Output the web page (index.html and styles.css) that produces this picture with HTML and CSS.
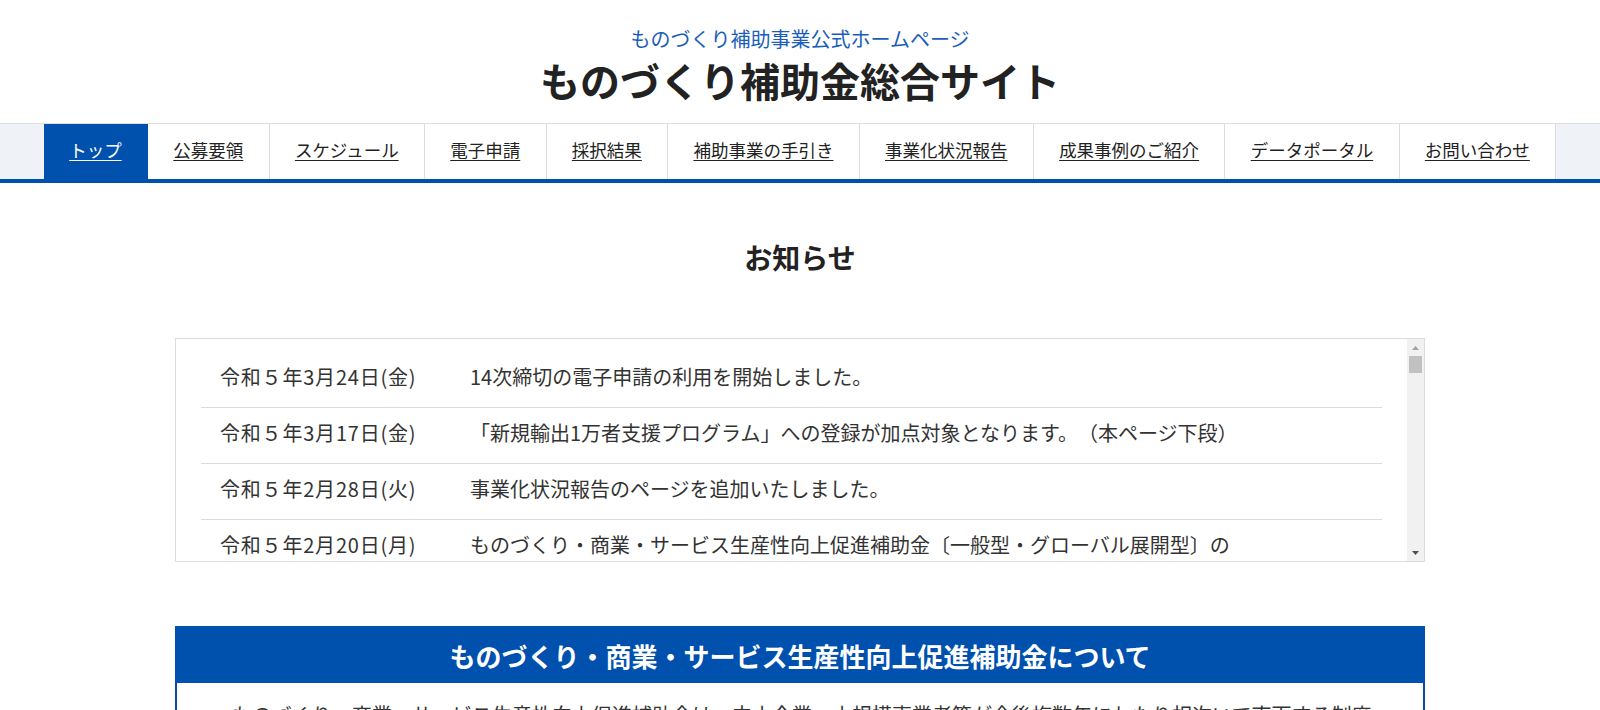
FILE: index.html
```html
<!DOCTYPE html>
<html lang="ja">
<head>
<meta charset="utf-8">
<title>ものづくり補助金総合サイト</title>
<link rel="stylesheet" href="styles.css">
</head>
<body>
<header class="site-header">
  <p class="site-sub">ものづくり補助事業公式ホームページ</p>
  <h1 class="site-title">ものづくり補助金総合サイト</h1>
</header>
<nav class="gnav">
  <ul class="gnav-list">
    <li class="gnav-item is-active"><a href="#">トップ</a></li>
    <li class="gnav-item"><a href="#">公募要領</a></li>
    <li class="gnav-item"><a href="#">スケジュール</a></li>
    <li class="gnav-item"><a href="#">電子申請</a></li>
    <li class="gnav-item"><a href="#">採択結果</a></li>
    <li class="gnav-item"><a href="#">補助事業の手引き</a></li>
    <li class="gnav-item"><a href="#">事業化状況報告</a></li>
    <li class="gnav-item"><a href="#">成果事例のご紹介</a></li>
    <li class="gnav-item"><a href="#">データポータル</a></li>
    <li class="gnav-item"><a href="#">お問い合わせ</a></li>
  </ul>
</nav>
<main class="main">
  <section class="news">
    <h2 class="news-title">お知らせ</h2>
    <div class="news-box">
      <div class="news-list">
        <dl class="news-row"><dt class="news-date">令和５年3月24日(金)</dt><dd class="news-text">14次締切の電子申請の利用を開始しました。</dd></dl>
        <dl class="news-row"><dt class="news-date">令和５年3月17日(金)</dt><dd class="news-text">「新規輸出1万者支援プログラム」への登録が加点対象となります。（本ページ下段）</dd></dl>
        <dl class="news-row"><dt class="news-date">令和５年2月28日(火)</dt><dd class="news-text">事業化状況報告のページを追加いたしました。</dd></dl>
        <dl class="news-row"><dt class="news-date">令和５年2月20日(月)</dt><dd class="news-text">ものづくり・商業・サービス生産性向上促進補助金〔一般型・グローバル展開型〕の公募要領を公開しました。</dd></dl>
        <dl class="news-row"><dt class="news-date">令和５年1月31日(火)</dt><dd class="news-text">13次締切の採択結果を公表しました。</dd></dl>
      </div>
      <div class="scrollbar" aria-hidden="true">
        <span class="sb-btn"><svg width="7" height="4" viewBox="0 0 7 4"><path d="M3.5 0L7 4H0z" fill="#a3a3a3"/></svg></span>
        <span class="sb-thumb"></span>
        <span class="sb-track"></span>
        <span class="sb-btn"><svg width="7" height="4" viewBox="0 0 7 4"><path d="M0 0H7L3.5 4z" fill="#505050"/></svg></span>
      </div>
    </div>
  </section>
  <section class="about">
    <h2 class="about-title">ものづくり・商業・サービス生産性向上促進補助金について</h2>
    <div class="about-body">
      <p>ものづくり・商業・サービス生産性向上促進補助金は、中小企業・小規模事業者等が今後複数年にわたり相次いで直面する制度変更（働き方改革や被用者保険の適用拡大、賃上げ、インボイス導入等）等に対応するため、中小企業・小規模事業者等が取り組む革新的サービス開発・試作品開発・生産プロセスの改善を行うための設備投資等を支援するものです。</p>
    </div>
  </section>
</main>
</body>
</html>
```
FILE: styles.css
```css
body {
  margin: 0;
  font-family: "Noto Sans CJK JP", "Noto Sans", sans-serif;
  color: #222;
  background: #fff;
  text-spacing-trim: space-all;
}
a {
  color: inherit;
}
.site-header {
  text-align: center;
  padding: 27px 0 19px;
}
.site-sub {
  margin: 0;
  font-size: 20px;
  line-height: 24px;
  color: #1b5eb9;
}
.site-title {
  margin: 5px 0 0;
  font-size: 40px;
  line-height: 48px;
  font-weight: 700;
  color: #222;
}
.gnav {
  background: #eff3f8;
  border-top: 1px solid #dedede;
  border-bottom: 4px solid #0050ae;
}
.gnav-list {
  list-style: none;
  margin: 0;
  padding: 0;
  display: flex;
  justify-content: center;
}
.gnav-item {
  background: #fff;
  border-right: 1px solid #dcdcdc;
}
.gnav-item a {
  display: block;
  padding: 0 25.3px;
  height: 55px;
  line-height: 52px;
  font-size: 17.5px;
  color: #222;
  text-decoration: underline;
  text-underline-offset: 3px;
}
.gnav-item.is-active {
  background: #0050ae;
  border-right-color: #0050ae;
}
.gnav-item.is-active a {
  color: #fff;
}
.main {
  width: 1250px;
  margin: 0 auto;
}
.news-title {
  margin: 54px 0 0;
  text-align: center;
  font-size: 28px;
  line-height: 40px;
  font-weight: 700;
  color: #222;
}
.news-box {
  margin-top: 61px;
  box-sizing: border-box;
  height: 224px;
  border: 1px solid #dcdcdc;
  display: flex;
}
.news-list {
  flex: 1;
  min-width: 0;
  overflow: hidden;
  padding: 13px 25px 0;
}
.scrollbar {
  flex: 0 0 17px;
  display: flex;
  flex-direction: column;
  background: #f1f1f1;
}
.sb-btn {
  height: 17px;
  display: flex;
  align-items: center;
  justify-content: center;
}
.sb-btn svg {
  display: block;
}
.sb-thumb {
  height: 17px;
  margin: 0 2px;
  background: #c1c1c1;
}
.sb-track {
  flex: 1;
}
.news-row {
  margin: 0;
  display: flex;
  height: 56px;
  box-sizing: border-box;
  padding: 0 0 5px 19px;
  border-bottom: 1px solid #dcdcdc;
  font-size: 20px;
  line-height: 50px;
  color: #333;
}
.news-row:nth-child(n+4) {
  height: auto;
}
.news-date {
  flex: 0 0 250px;
  letter-spacing: 0.8px;
}
.news-text {
  margin: 0;
  max-width: 775px;
}
.about {
  margin-top: 64px;
  border: 2px solid #0050ae;
}
.about-title {
  margin: 0;
  background: #0050ae;
  color: #fff;
  text-align: center;
  font-size: 26px;
  line-height: 55px;
  font-weight: 700;
}
.about-body {
  padding: 14px 50px 30px 55px;
  font-size: 20px;
  line-height: 36px;
  color: #333;
}
.about-body p {
  margin: 0;
}
```
